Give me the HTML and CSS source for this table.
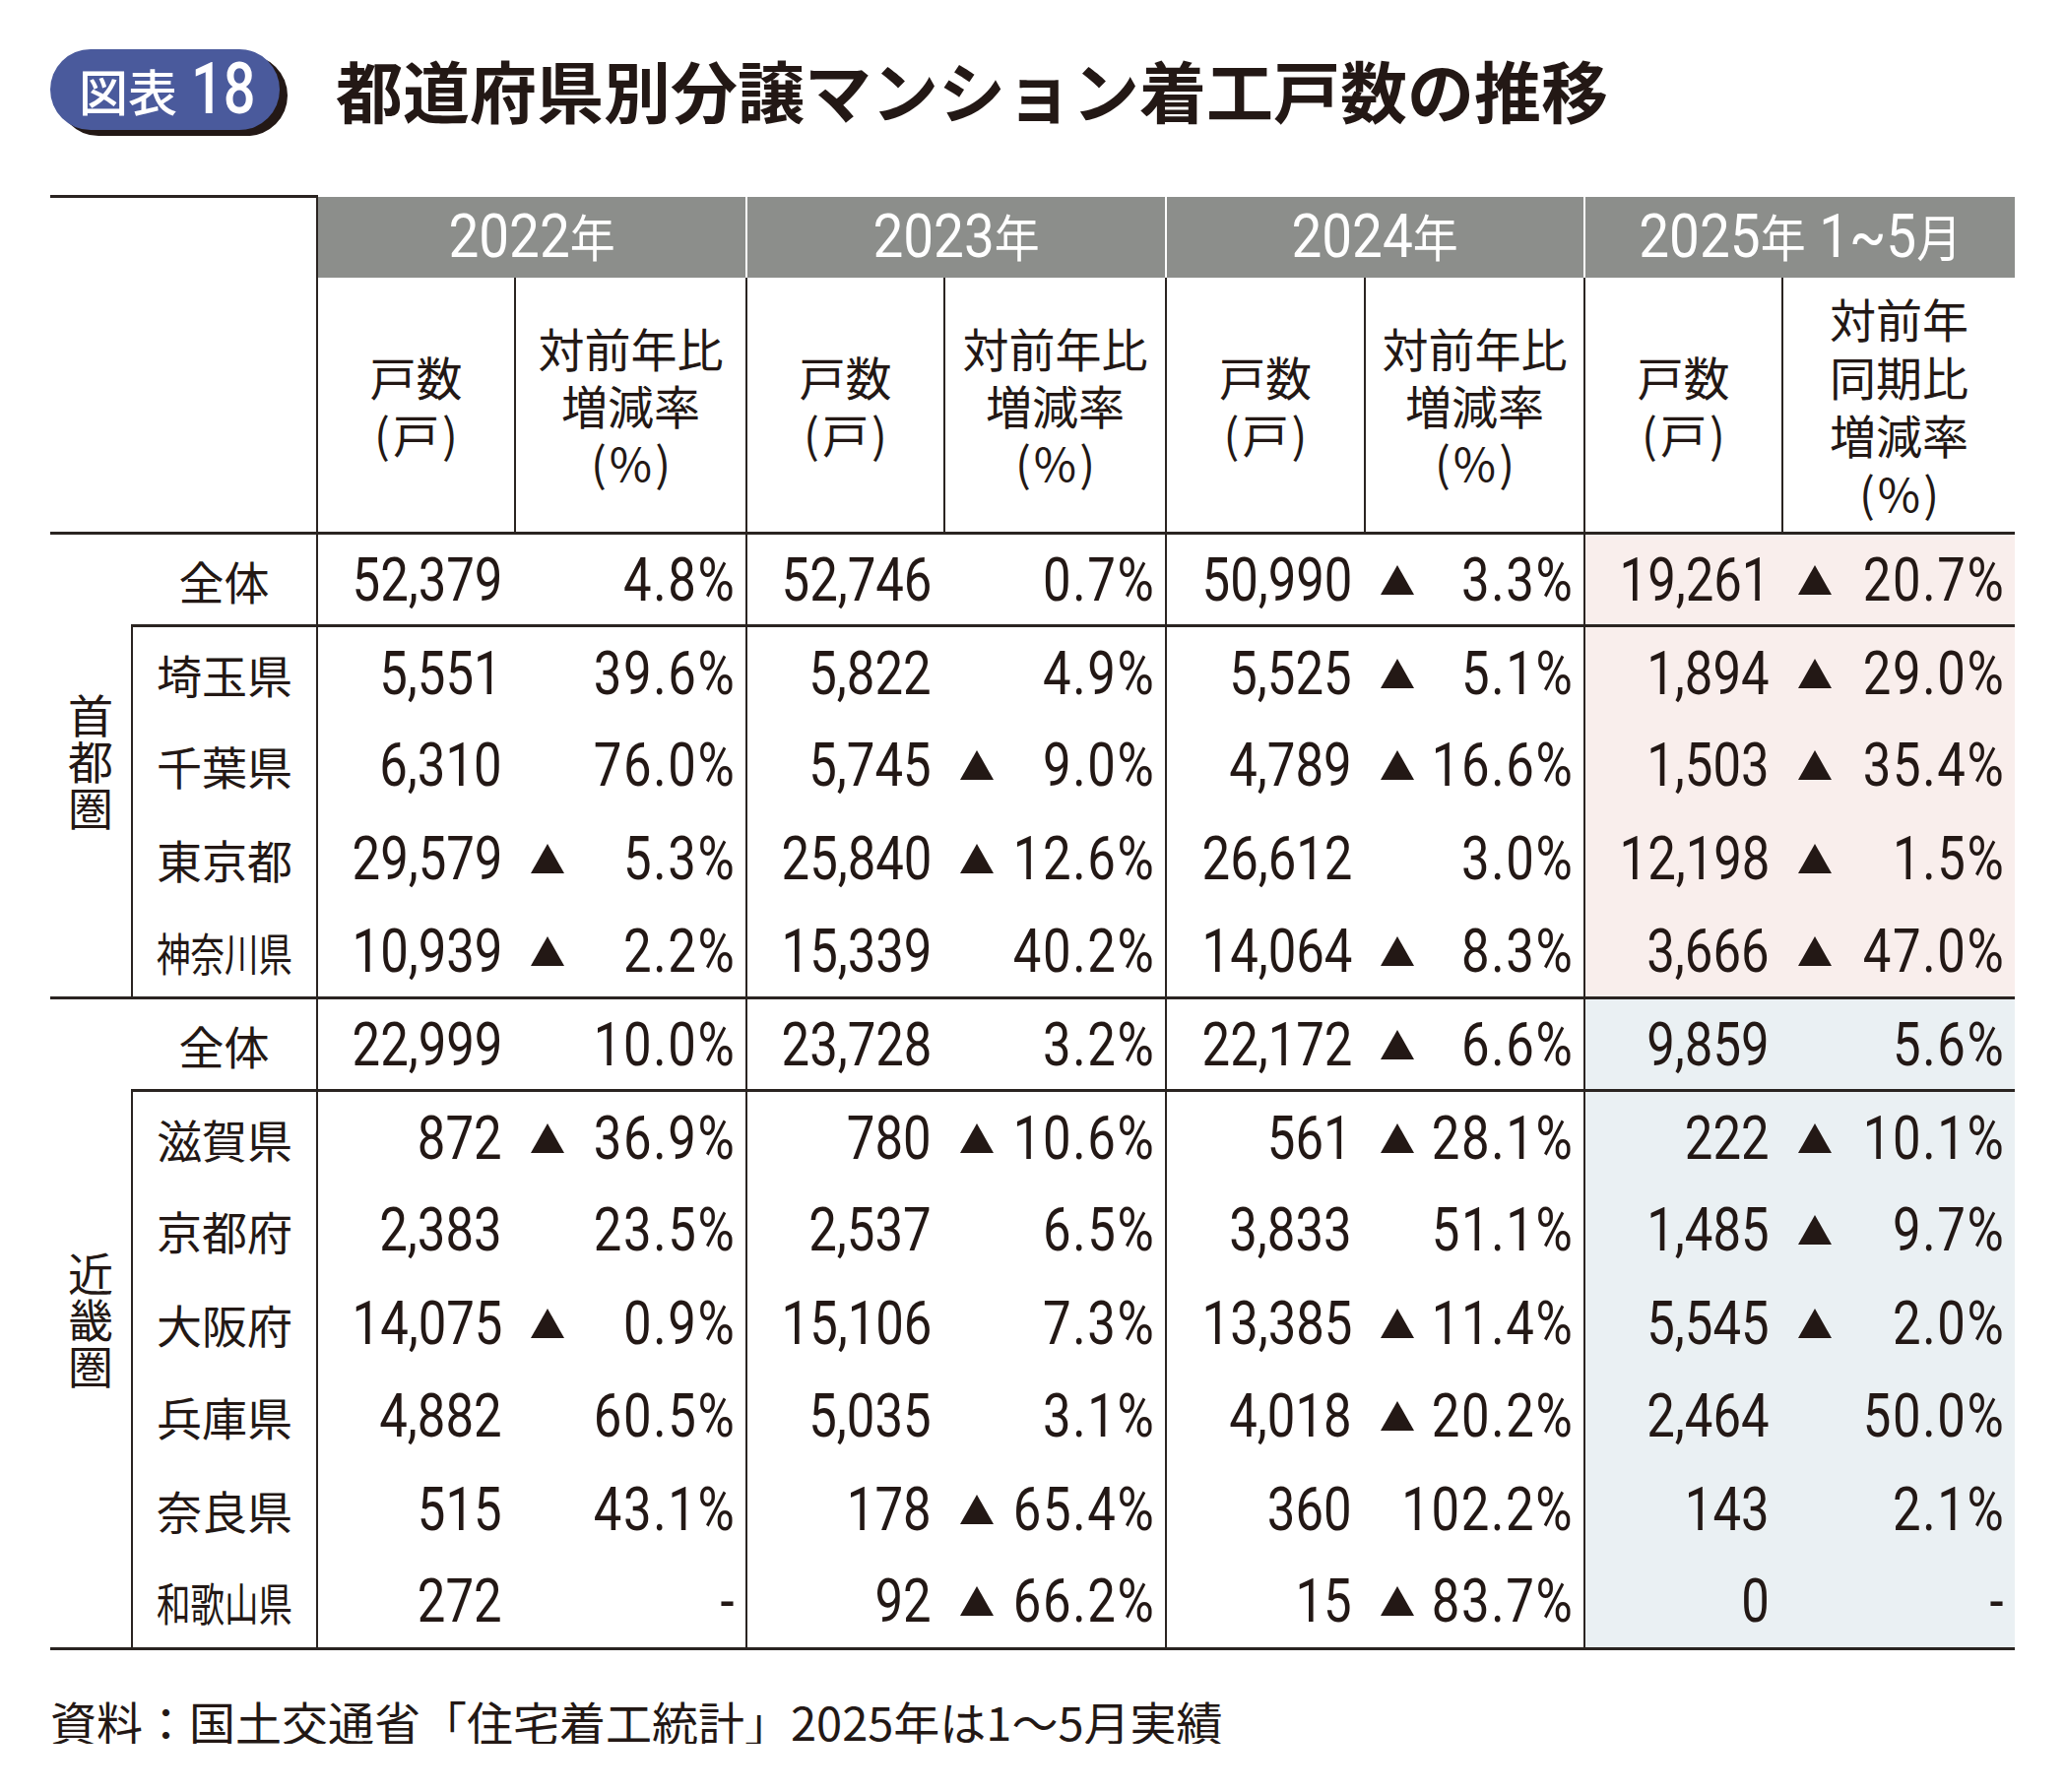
FILE: index.html
```html
<!DOCTYPE html>
<html lang="ja">
<head>
<meta charset="utf-8">
<title>都道府県別分譲マンション着工戸数の推移</title>
<link rel="stylesheet" href="styles.css">
</head>
<body>
<div class="page">
  <header class="title-row">
    <div class="badge"><span class="badge-jp">図表</span><span class="badge-num">18</span></div>
    <h1 class="title">都道府県別分譲マンション着工戸数の推移</h1>
  </header>

  <table class="data">
    <colgroup>
      <col class="w-region"><col class="w-name">
      <col class="w-cnt1"><col class="w-pct1">
      <col class="w-cnt2"><col class="w-pct2">
      <col class="w-cnt3"><col class="w-pct3">
      <col class="w-cnt4"><col class="w-pct4">
    </colgroup>
    <thead>
      <tr class="yr">
        <th class="corner" rowspan="2" colspan="2"></th>
        <th class="year first" colspan="2"><span class="yt">2022<span class="yk">年</span></span></th>
        <th class="year" colspan="2"><span class="yt">2023<span class="yk">年</span></span></th>
        <th class="year" colspan="2"><span class="yt">2024<span class="yk">年</span></span></th>
        <th class="year last" colspan="2"><span class="yt">2025<span class="yk">年</span> 1~5<span class="yk">月</span></span></th>
      </tr>
      <tr class="subrow">
        <th class="sub">戸数<br><span class="paren">(戸)</span></th>
        <th class="sub">対前年比<br>増減率<br><span class="paren">(%)</span></th>
        <th class="sub">戸数<br><span class="paren">(戸)</span></th>
        <th class="sub">対前年比<br>増減率<br><span class="paren">(%)</span></th>
        <th class="sub">戸数<br><span class="paren">(戸)</span></th>
        <th class="sub">対前年比<br>増減率<br><span class="paren">(%)</span></th>
        <th class="sub">戸数<br><span class="paren">(戸)</span></th>
        <th class="sub sub-last">対前年<br>同期比<br>増減率<br><span class="paren">(%)</span></th>
      </tr>
    </thead>
    <tbody>
      <!-- 首都圏 -->
      <tr class="row total">
        <td class="region" rowspan="5"><span class="region-label">首都圏</span></td>
        <td class="name total-name">全体</td>
        <td class="cnt"><span class="n">52,379</span></td>
        <td class="pct"><div class="pc"><span class="n">4.8%</span></div></td>
        <td class="cnt"><span class="n">52,746</span></td>
        <td class="pct"><div class="pc"><span class="n">0.7%</span></div></td>
        <td class="cnt"><span class="n">50,990</span></td>
        <td class="pct"><div class="pc"><svg class="tri" viewBox="0 0 34 30"><path d="M17 0L34 30H0Z"/></svg><span class="n">3.3%</span></div></td>
        <td class="cnt pink"><span class="n">19,261</span></td>
        <td class="pct pink"><div class="pc"><svg class="tri" viewBox="0 0 34 30"><path d="M17 0L34 30H0Z"/></svg><span class="n">20.7%</span></div></td>
      </tr>
      <tr class="row">
        <td class="name">埼玉県</td>
        <td class="cnt"><span class="n">5,551</span></td>
        <td class="pct"><div class="pc"><span class="n">39.6%</span></div></td>
        <td class="cnt"><span class="n">5,822</span></td>
        <td class="pct"><div class="pc"><span class="n">4.9%</span></div></td>
        <td class="cnt"><span class="n">5,525</span></td>
        <td class="pct"><div class="pc"><svg class="tri" viewBox="0 0 34 30"><path d="M17 0L34 30H0Z"/></svg><span class="n">5.1%</span></div></td>
        <td class="cnt pink"><span class="n">1,894</span></td>
        <td class="pct pink"><div class="pc"><svg class="tri" viewBox="0 0 34 30"><path d="M17 0L34 30H0Z"/></svg><span class="n">29.0%</span></div></td>
      </tr>
      <tr class="row">
        <td class="name">千葉県</td>
        <td class="cnt"><span class="n">6,310</span></td>
        <td class="pct"><div class="pc"><span class="n">76.0%</span></div></td>
        <td class="cnt"><span class="n">5,745</span></td>
        <td class="pct"><div class="pc"><svg class="tri" viewBox="0 0 34 30"><path d="M17 0L34 30H0Z"/></svg><span class="n">9.0%</span></div></td>
        <td class="cnt"><span class="n">4,789</span></td>
        <td class="pct"><div class="pc"><svg class="tri" viewBox="0 0 34 30"><path d="M17 0L34 30H0Z"/></svg><span class="n">16.6%</span></div></td>
        <td class="cnt pink"><span class="n">1,503</span></td>
        <td class="pct pink"><div class="pc"><svg class="tri" viewBox="0 0 34 30"><path d="M17 0L34 30H0Z"/></svg><span class="n">35.4%</span></div></td>
      </tr>
      <tr class="row">
        <td class="name">東京都</td>
        <td class="cnt"><span class="n">29,579</span></td>
        <td class="pct"><div class="pc"><svg class="tri" viewBox="0 0 34 30"><path d="M17 0L34 30H0Z"/></svg><span class="n">5.3%</span></div></td>
        <td class="cnt"><span class="n">25,840</span></td>
        <td class="pct"><div class="pc"><svg class="tri" viewBox="0 0 34 30"><path d="M17 0L34 30H0Z"/></svg><span class="n">12.6%</span></div></td>
        <td class="cnt"><span class="n">26,612</span></td>
        <td class="pct"><div class="pc"><span class="n">3.0%</span></div></td>
        <td class="cnt pink"><span class="n">12,198</span></td>
        <td class="pct pink"><div class="pc"><svg class="tri" viewBox="0 0 34 30"><path d="M17 0L34 30H0Z"/></svg><span class="n">1.5%</span></div></td>
      </tr>
      <tr class="row last">
        <td class="name"><span class="cond">神奈川県</span></td>
        <td class="cnt"><span class="n">10,939</span></td>
        <td class="pct"><div class="pc"><svg class="tri" viewBox="0 0 34 30"><path d="M17 0L34 30H0Z"/></svg><span class="n">2.2%</span></div></td>
        <td class="cnt"><span class="n">15,339</span></td>
        <td class="pct"><div class="pc"><span class="n">40.2%</span></div></td>
        <td class="cnt"><span class="n">14,064</span></td>
        <td class="pct"><div class="pc"><svg class="tri" viewBox="0 0 34 30"><path d="M17 0L34 30H0Z"/></svg><span class="n">8.3%</span></div></td>
        <td class="cnt pink"><span class="n">3,666</span></td>
        <td class="pct pink"><div class="pc"><svg class="tri" viewBox="0 0 34 30"><path d="M17 0L34 30H0Z"/></svg><span class="n">47.0%</span></div></td>
      </tr>

      <!-- 近畿圏 -->
      <tr class="row total">
        <td class="region" rowspan="7"><span class="region-label">近畿圏</span></td>
        <td class="name total-name">全体</td>
        <td class="cnt"><span class="n">22,999</span></td>
        <td class="pct"><div class="pc"><span class="n">10.0%</span></div></td>
        <td class="cnt"><span class="n">23,728</span></td>
        <td class="pct"><div class="pc"><span class="n">3.2%</span></div></td>
        <td class="cnt"><span class="n">22,172</span></td>
        <td class="pct"><div class="pc"><svg class="tri" viewBox="0 0 34 30"><path d="M17 0L34 30H0Z"/></svg><span class="n">6.6%</span></div></td>
        <td class="cnt blue"><span class="n">9,859</span></td>
        <td class="pct blue"><div class="pc"><span class="n">5.6%</span></div></td>
      </tr>
      <tr class="row">
        <td class="name">滋賀県</td>
        <td class="cnt"><span class="n">872</span></td>
        <td class="pct"><div class="pc"><svg class="tri" viewBox="0 0 34 30"><path d="M17 0L34 30H0Z"/></svg><span class="n">36.9%</span></div></td>
        <td class="cnt"><span class="n">780</span></td>
        <td class="pct"><div class="pc"><svg class="tri" viewBox="0 0 34 30"><path d="M17 0L34 30H0Z"/></svg><span class="n">10.6%</span></div></td>
        <td class="cnt"><span class="n">561</span></td>
        <td class="pct"><div class="pc"><svg class="tri" viewBox="0 0 34 30"><path d="M17 0L34 30H0Z"/></svg><span class="n">28.1%</span></div></td>
        <td class="cnt blue"><span class="n">222</span></td>
        <td class="pct blue"><div class="pc"><svg class="tri" viewBox="0 0 34 30"><path d="M17 0L34 30H0Z"/></svg><span class="n">10.1%</span></div></td>
      </tr>
      <tr class="row">
        <td class="name">京都府</td>
        <td class="cnt"><span class="n">2,383</span></td>
        <td class="pct"><div class="pc"><span class="n">23.5%</span></div></td>
        <td class="cnt"><span class="n">2,537</span></td>
        <td class="pct"><div class="pc"><span class="n">6.5%</span></div></td>
        <td class="cnt"><span class="n">3,833</span></td>
        <td class="pct"><div class="pc"><span class="n">51.1%</span></div></td>
        <td class="cnt blue"><span class="n">1,485</span></td>
        <td class="pct blue"><div class="pc"><svg class="tri" viewBox="0 0 34 30"><path d="M17 0L34 30H0Z"/></svg><span class="n">9.7%</span></div></td>
      </tr>
      <tr class="row">
        <td class="name">大阪府</td>
        <td class="cnt"><span class="n">14,075</span></td>
        <td class="pct"><div class="pc"><svg class="tri" viewBox="0 0 34 30"><path d="M17 0L34 30H0Z"/></svg><span class="n">0.9%</span></div></td>
        <td class="cnt"><span class="n">15,106</span></td>
        <td class="pct"><div class="pc"><span class="n">7.3%</span></div></td>
        <td class="cnt"><span class="n">13,385</span></td>
        <td class="pct"><div class="pc"><svg class="tri" viewBox="0 0 34 30"><path d="M17 0L34 30H0Z"/></svg><span class="n">11.4%</span></div></td>
        <td class="cnt blue"><span class="n">5,545</span></td>
        <td class="pct blue"><div class="pc"><svg class="tri" viewBox="0 0 34 30"><path d="M17 0L34 30H0Z"/></svg><span class="n">2.0%</span></div></td>
      </tr>
      <tr class="row">
        <td class="name">兵庫県</td>
        <td class="cnt"><span class="n">4,882</span></td>
        <td class="pct"><div class="pc"><span class="n">60.5%</span></div></td>
        <td class="cnt"><span class="n">5,035</span></td>
        <td class="pct"><div class="pc"><span class="n">3.1%</span></div></td>
        <td class="cnt"><span class="n">4,018</span></td>
        <td class="pct"><div class="pc"><svg class="tri" viewBox="0 0 34 30"><path d="M17 0L34 30H0Z"/></svg><span class="n">20.2%</span></div></td>
        <td class="cnt blue"><span class="n">2,464</span></td>
        <td class="pct blue"><div class="pc"><span class="n">50.0%</span></div></td>
      </tr>
      <tr class="row">
        <td class="name">奈良県</td>
        <td class="cnt"><span class="n">515</span></td>
        <td class="pct"><div class="pc"><span class="n">43.1%</span></div></td>
        <td class="cnt"><span class="n">178</span></td>
        <td class="pct"><div class="pc"><svg class="tri" viewBox="0 0 34 30"><path d="M17 0L34 30H0Z"/></svg><span class="n">65.4%</span></div></td>
        <td class="cnt"><span class="n">360</span></td>
        <td class="pct"><div class="pc"><span class="n">102.2%</span></div></td>
        <td class="cnt blue"><span class="n">143</span></td>
        <td class="pct blue"><div class="pc"><span class="n">2.1%</span></div></td>
      </tr>
      <tr class="row last">
        <td class="name"><span class="cond">和歌山県</span></td>
        <td class="cnt"><span class="n">272</span></td>
        <td class="pct"><div class="pc"><span class="n">-</span></div></td>
        <td class="cnt"><span class="n">92</span></td>
        <td class="pct"><div class="pc"><svg class="tri" viewBox="0 0 34 30"><path d="M17 0L34 30H0Z"/></svg><span class="n">66.2%</span></div></td>
        <td class="cnt"><span class="n">15</span></td>
        <td class="pct"><div class="pc"><svg class="tri" viewBox="0 0 34 30"><path d="M17 0L34 30H0Z"/></svg><span class="n">83.7%</span></div></td>
        <td class="cnt blue"><span class="n">0</span></td>
        <td class="pct blue"><div class="pc"><span class="n">-</span></div></td>
      </tr>
    </tbody>
  </table>

  <p class="source">資料：国土交通省「住宅着工統計」2025年は1〜5月実績</p>
</div>
</body>
</html>
```

FILE: styles.css
```css
* {
  box-sizing: border-box;
}

html,
body {
  margin: 0;
  padding: 0;
  background: #ffffff;
}

body {
  font-family: "Noto Sans CJK JP", "Noto Sans", sans-serif;
  color: #231815;
}

.page {
  width: 2097px;
  padding: 50px 51px 0 51px;
}

/* ---------- title ---------- */
.title-row {
  display: flex;
  align-items: center;
  gap: 57px;
  height: 82px;
}

.badge {
  flex: none;
  width: 233px;
  height: 82px;
  border-radius: 41px;
  background: #4a5a9c;
  box-shadow: 8px 6px 0 #231815;
  display: flex;
  align-items: center;
  padding-left: 29px;
  gap: 14px;
  color: #ffffff;
}

.badge-jp {
  font-size: 50px;
  font-weight: 500;
  line-height: 1;
}

.badge-num {
  display: inline-block;
  font-family: Roboto, sans-serif;
  font-size: 72px;
  font-weight: 500;
  line-height: 1;
  transform: scaleX(0.8);
  transform-origin: 0 50%;
}

.title {
  margin: 0;
  font-size: 68px;
  font-weight: 700;
  line-height: 1;
  letter-spacing: 0;
  color: #231815;
}

/* ---------- table ---------- */
.data {
  margin-top: 66px;
  border-collapse: collapse;
  table-layout: fixed;
  width: 1995px;
}

.w-region { width: 83px; }
.w-name   { width: 188px; }
.w-cnt1   { width: 201px; }
.w-pct1   { width: 235px; }
.w-cnt2   { width: 201px; }
.w-pct2   { width: 225px; }
.w-cnt3   { width: 202px; }
.w-pct3   { width: 223px; }
.w-cnt4   { width: 201px; }
.w-pct4   { width: 236px; }

.data th,
.data td {
  padding: 0;
  font-weight: 400;
}

.corner {
  border-top: 3px solid #2a2421;
  border-right: 2px solid #2a2421;
  border-bottom: 3px solid #2a2421;
}

.yr {
  height: 82px;
}

.year {
  background: #8c8e8b;
  color: #ffffff;
  text-align: center;
  vertical-align: middle;
  border-left: 2px solid #ffffff;
  border-right: 2px solid #ffffff;
}

.year.first {
  border-left: 2px solid #2a2421;
}

.year.last {
  border-right: none;
}

.yt {
  display: inline-block;
  font-family: Roboto, "Noto Sans CJK JP", sans-serif;
  font-size: 61px;
  line-height: 1;
  transform: scaleX(0.9);
  transform-origin: 50% 50%;
  white-space: nowrap;
}

.yk {
  font-family: "Noto Sans CJK JP", sans-serif;
  font-size: 51px;
}

.subrow {
  height: 260px;
}

.sub {
  font-size: 47px;
  line-height: 58px;
  text-align: center;
  vertical-align: middle;
  border-left: 2px solid #2a2421;
  border-bottom: 3px solid #2a2421;
  color: #231815;
}

.sub-last {
  line-height: 59px;
}

.paren {
  letter-spacing: 3px;
  margin-right: -3px;
}

.row {
  height: 94.4px;
}

.region {
  text-align: center;
  vertical-align: middle;
  border-bottom: 3px solid #2a2421;
}

.region-label {
  display: inline-block;
  writing-mode: vertical-rl;
  font-size: 46px;
  line-height: 1;
  letter-spacing: 1px;
}

.name {
  font-size: 46px;
  line-height: 1;
  text-align: center;
  vertical-align: middle;
  border-left: 2px solid #2a2421;
  white-space: nowrap;
}

.name.total-name {
  border-left: none;
}

.cond {
  display: inline-block;
  transform: scaleX(0.75);
  transform-origin: 50% 50%;
}

.cnt {
  text-align: right;
  vertical-align: middle;
  padding-right: 13px !important;
  border-left: 2px solid #2a2421;
  white-space: nowrap;
}

.pct {
  vertical-align: middle;
  padding: 0 10px 0 16px !important;
  white-space: nowrap;
}

.pc {
  display: flex;
  align-items: center;
  justify-content: flex-end;
}

.pc .n {
  flex: none;
  margin-left: auto;
  letter-spacing: 2px;
}

.n {
  display: inline-block;
  font-family: Roboto, sans-serif;
  font-size: 62px;
  line-height: 1;
  transform: scaleX(0.82);
  transform-origin: 100% 50%;
  color: #231815;
}

.tri {
  flex: none;
  width: 34px;
  height: 30px;
  margin-right: -34px;
  fill: #231815;
}

.total td,
.last td {
  border-bottom: 3px solid #2a2421;
}

.pink {
  background: #f9eeec;
}

.blue {
  background: #eaf0f3;
}

/* ---------- source ---------- */
.source {
  margin: 48px 0 0 0;
  font-size: 47px;
  line-height: 1;
  color: #231815;
  white-space: nowrap;
}
```
